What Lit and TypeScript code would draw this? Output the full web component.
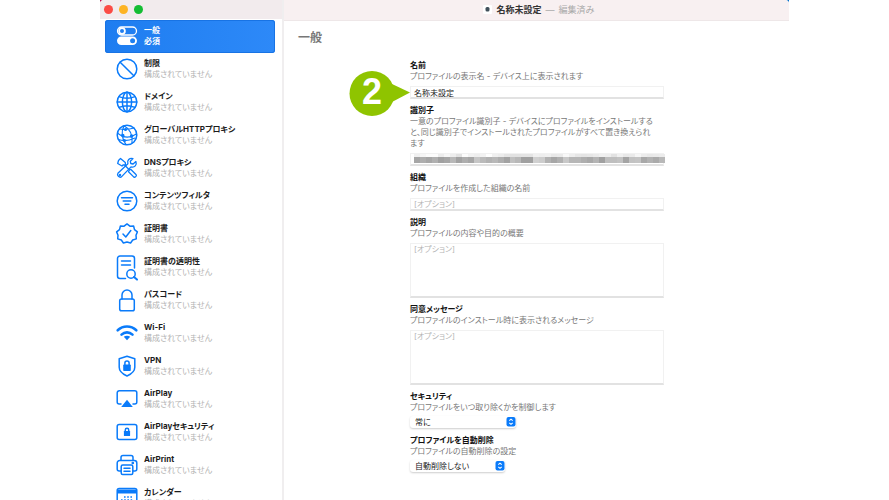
import { LitElement, html, svg, css } from "lit";
import { customElement, state } from "lit/decorators.js";
import { classMap } from "lit/directives/class-map.js";

const NONE = "構成されていません";

const icons: Record<string, unknown> = {
  toggles: svg`
    <rect x="1.5" y="2" width="19" height="8" rx="4" fill="none" stroke="currentColor" stroke-width="1.3"/>
    <circle cx="6" cy="6" r="2.9" fill="none" stroke="currentColor" stroke-width="1.8"/>
    <rect x="1" y="11.4" width="20" height="8.6" rx="4.3" fill="currentColor"/>
    <circle cx="16.6" cy="15.7" r="2.5" fill="#1f80f2"/>`,
  ban: svg`<circle cx="11" cy="11" r="9.8"/><path d="M4.2 4.2l13.6 13.6"/>`,
  globe: svg`<circle cx="11" cy="11" r="9.8"/><ellipse cx="11" cy="11" rx="4.6" ry="9.8"/>
    <path d="M11 1.2v19.6M1.2 11h19.6M3 5.6c4.6 1.8 11.4 1.8 16 0M3 16.4c4.6-1.8 11.4-1.8 16 0"/>`,
  network: svg`<circle cx="11" cy="11" r="9.8"/>
    <path stroke-width="1.2" d="M8 1.8C5 8 6 15 10 20.600M8 1.8C14 5 17 10 16 19.200M1.400 9c6 5 13 5 19 1M3.500 5c6 1 11.500 0 14.500-1M2.500 15.500c5 2 11 1 16.500-1.500"/>
    <circle cx="9.500" cy="5.500" r=".8" class="solid"/><circle cx="6.800" cy="11.500" r="1" class="solid"/><circle cx="15.600" cy="12" r="1" class="solid"/><circle cx="8.500" cy="16.500" r=".8" class="solid"/>`,
  tools: svg`
    <path stroke-width="1.3" d="M2.500 3.500l2-2 4.800 4 .2 2.500-2.500 0-1 1L1.700 6.500z M9 8.500l4.500 4.500M13.200 13.300l1.500-1 5.500 5.500c.8 1-1.200 3-2.300 2.300l-5.400-5.300z"/>
    <path stroke-width="1.3" d="M19.900 4.500l-2.800 2.500-2.300-.5-.5-2.200 2.700-2.700c-3.500-1-6.300 1.800-5.100 5.200L1.900 16.300c-1.400 2 1.500 4.800 3.500 3.600L15 9.900c3.500 1.100 6.200-1.900 4.900-5.400z"/>
    <circle cx="4" cy="18" r=".5"/>`,
  filter: svg`<circle cx="11" cy="11" r="9.8"/><path d="M5.500 7.800h11M7.200 11h7.600M9 14.200h4"/>`,
  seal: svg`<path d="M11 .9l2.900 2.300 3.700-.2.900 3.600 2.900 2.300L20 12.300l.3 3.600-3.600 1.100-2.100 3-3.600-1-3.600 1-2.100-3-3.600-1.100.3-3.600L.6 8.900l2.900-2.300L4.400 3l3.700.2z"/><path d="M7 11l2.800 3 5-6.500"/>`,
  doc: svg`<path d="M9.500 22.500H4A2.500 2.500 0 0 1 1.500 20V2.500A2.500 2.500 0 0 1 4 0h12a2.500 2.500 0 0 1 2.500 2.500V12M5.500 5h9M5.500 9h9"/>
    <circle cx="15" cy="18" r="4.200"/><path d="M18 21l3 2.600" stroke-width="2"/>`,
  lock: svg`<rect x="3.700" y="10" width="14.600" height="11.800" rx="1.800"/><path d="M6 10V6a5 5 0 0 1 10 0v4"/>`,
  wifi: svg`<path stroke-width="2.600" d="M1.700 8.300c5.300-5 13.300-5 18.600 0M5.500 12.600c3.200-3 7.800-3 11 0"/><path class="solid" stroke="none" d="M7.800 14.800c1.900-1.500 4.500-1.500 6.400 0L11 18.200z"/>`,
  shield: svg`<path d="M11 1.200l7.800 2.600v8.400c0 4-3.500 6.800-7.800 8.800-4.300-2-7.800-4.800-7.800-8.800V3.800z"/>
    <rect x="7.200" y="9.500" width="7.600" height="6.500" rx=".8" class="solid" stroke="none"/><path d="M8.900 10V8a2.100 2.100 0 0 1 4.200 0v2"/>`,
  airplay: svg`<path d="M5 16H3.200A2 2 0 0 1 1.200 14V4.800a2 2 0 0 1 2-2h15.600a2 2 0 0 1 2 2V14a2 2 0 0 1-2 2H17"/><path class="solid" stroke="none" d="M11 11.800l5.800 7.200H5.200z"/>`,
  airlock: svg`<rect x="1.200" y="3.600" width="19.600" height="14.800" rx="2"/><rect x="7.900" y="10" width="6.200" height="5" rx=".6" class="solid" stroke="none"/><path d="M9.300 10.500V9a1.700 1.700 0 0 1 3.400 0v1.500"/>`,
  printer: svg`<path d="M5 6.500V3.600a2 2 0 0 1 2-2h8a2 2 0 0 1 2 2v2.900M5 17H3.200a2 2 0 0 1-2-2V9a2.500 2.500 0 0 1 2.500-2.500h14.600A2.500 2.500 0 0 1 20.800 9v6a2 2 0 0 1-2 2H17"/><rect x="5.200" y="11" width="11.600" height="9.400" rx="1.500"/><path d="M8 14.200h6M8 17.200h6"/><circle cx="16.800" cy="9" r=".6" class="solid"/>`,
  calendar: svg`<rect x="1.200" y="1.500" width="19.600" height="18.500" rx="2"/><path class="solid" stroke="none" d="M1 2.500h20v4H1z"/><path stroke-dasharray="1.600 1.600" stroke-linecap="butt" stroke-width="1.700" d="M8 10h9.500M5 13h12.500M5 16h9"/>`,
};

const payloads = [
  ["toggles", "一般", "必須"],
  ["ban", "制限", NONE],
  ["globe", "ドメイン", NONE],
  ["network", "グローバルHTTPプロキシ", NONE],
  ["tools", "DNSプロキシ", NONE],
  ["filter", "コンテンツフィルタ", NONE],
  ["seal", "証明書", NONE],
  ["doc", "証明書の透明性", NONE],
  ["lock", "パスコード", NONE],
  ["wifi", "Wi-Fi", NONE],
  ["shield", "VPN", NONE],
  ["airplay", "AirPlay", NONE],
  ["airlock", "AirPlayセキュリティ", NONE],
  ["printer", "AirPrint", NONE],
  ["calendar", "カレンダー", NONE],
];

/* Grey levels of the blocks that hide the identifier: [upper row, lower row]. */
const mosaic = [
  [240, 166], [246, 174], [252, 166], [252, 176], [236, 160], [246, 166], [238, 184], [226, 162], [252, 174], [242, 166], [238, 198],
  [242, 186], [254, 178], [240, 184], [236, 174], [228, 162], [226, 192], [226, 184], [228, 160], [228, 160], [240, 208],
  [238, 204], [240, 178], [232, 166], [234, 176], [248, 200], [238, 182], [230, 182], [228, 174], [230, 168], [234, 180], [240, 160],
  [238, 190], [226, 190], [240, 194], [232, 164], [234, 194], [246, 196], [236, 168], [232, 178], [234, 170], [236, 184],
];

@customElement("app-root")
export class AppRoot extends LitElement {
  @state() private selected = 0;

  static styles = css`
    :host {
      display: block;
      min-height: 100vh;
      background: #fff;
      color: #1c1c1c;
      font: 8px/11px Inter, "Noto Sans CJK JP", sans-serif;
      font-feature-settings: "palt";
    }
    * { box-sizing: border-box; }
    .backdrop {
      margin: 0 100px;
      background: linear-gradient(90deg, #c8104e 50%, #0a72cc 50%);
    }
    .window {
      display: grid;
      grid-template-columns: 184px 1fr;
      height: 100vh;
      overflow: hidden;
      background: #fff;
      border-radius: 4px 4px 0 0;
    }
    .sidebar { border-right: 2px solid #f0eeef; overflow: hidden; }
    .lights {
      display: flex;
      align-items: center;
      gap: 6px;
      height: 19px;
      padding-left: 4px;
      background: #f2ebed;
    }
    .light { width: 9px; height: 9px; border-radius: 50%; }
    .close { background: #fb4b45; }
    .minimise { background: #fdb323; }
    .zoom { background: #14bd33; }
    .list { list-style: none; margin: 0; padding: 1px 7px 0 5px; }
    .item {
      display: flex;
      align-items: center;
      gap: 6px;
      width: 100%;
      height: 33px;
      padding: 0 0 1px 11px;
      border: 0;
      border-radius: 3px;
      background: none;
      color: #1c1c1c;
      font: inherit;
      font-feature-settings: inherit;
      text-align: left;
    }
    .item.selected {
      background: linear-gradient(90deg, #1e7df0, #2d89f8);
      color: #fff;
      box-shadow: inset 0 0 0 1px #1873e4;
    }
    .icon {
      flex: none;
      width: 22px;
      height: 22px;
      overflow: visible;
      color: #0a7bfa;
      fill: none;
      stroke: currentColor;
      stroke-width: 1.5;
      stroke-linejoin: round;
      stroke-linecap: round;
    }
    .icon .solid { fill: currentColor; }
    .selected .icon { color: #fff; stroke: none; }
    .name, .status { display: block; line-height: 11px; white-space: nowrap; }
    .name { font-weight: 700; }
    .status { color: #b2b2b2; }
    .selected .status { color: #fff; font-weight: 700; }
    .titlebar {
      display: flex;
      align-items: center;
      justify-content: center;
      gap: 4px;
      height: 21px;
      padding: 0 0 2px 4px;
      background: #f8f0f1;
      border-bottom: 1px solid #eee7e8;
      font-size: 9px;
    }
    .file { width: 9px; height: 9px; margin-right: 1px; }
    .titlebar strong { color: #333; }
    .edited { color: #aaa; }
    .pane { min-width: 0; }
    .heading { margin: 0; padding: 8px 0 0 14px; font-size: 12px; line-height: 17px; font-weight: 700; color: #777; }
    .form {
      display: grid;
      gap: 5px;
      margin: 13px 125px 0 126px;
    }
    .field { display: flex; flex-direction: column; position: relative; min-width: 0; }
    label { font-weight: 700; line-height: 12px; color: #111; }
    .hint { margin: 0 0 4px; color: #777; }
    .box {
      width: 100%;
      height: 13px;
      padding: 0 3px;
      border: 1px solid #f1f1f1;
      border-bottom: 2px solid #e2e2e2;
      border-radius: 0;
      background: #fff;
      color: #222;
      font: inherit;
      font-feature-settings: inherit;
      outline: 0;
      resize: none;
      display: block;
    }
    .box::placeholder { color: #b5b5b5; opacity: 1; }
    .area { height: 55px; }
    .mosaic {
      position: absolute;
      inset: auto -1px 3px 4px;
      display: flex;
      height: 9px;
    }
    .mosaic span { flex: 1; display: flex; flex-direction: column; }
    .mosaic i { height: 3px; }
    .mosaic i + i { height: 6px; }
    .picker { position: relative; margin-top: -1px; }
    .picker select {
      appearance: none;
      display: block;
      width: 100%;
      height: 12px;
      padding: 0 5px;
      border: 0;
      border-radius: 3px;
      background: #fff;
      box-shadow: 0 1px 2px #0003;
      color: #222;
      font: inherit;
      font-feature-settings: inherit;
      outline: 0;
      margin-bottom: 1px;
    }
    .wide { width: 106px; }
    .narrow { width: 95px; }
    .chevrons { position: absolute; right: 0; top: 1px; width: 10px; height: 10px; pointer-events: none; }
    .callout {
      position: absolute;
      left: -62px;
      top: 12px;
      width: 62px;
      height: 45px;
      color: #fff;
      font: 700 36px/42px "Liberation Sans", sans-serif;
    }
    .callout svg { position: absolute; inset: 0; width: 62px; height: 45px; }
    .digit { position: relative; display: block; width: 48px; text-align: center; }
  `;

  private chevrons() {
    return html`<svg class="chevrons" viewBox="0 0 10 10" aria-hidden="true">
      <rect x=".5" width="9" height="9.500" rx="2" fill="#0a7bfa" />
      <path d="M3.300 3.700L5 2.200l1.700 1.500M3.300 5.800L5 7.300l1.700-1.500" fill="none" stroke="#fff" stroke-width="1.100" />
    </svg>`;
  }

  render() {
    return html`
      <div class="backdrop">
        <div class="window">
          <nav class="sidebar">
            <div class="lights">
              <span class="light close"></span><span class="light minimise"></span><span class="light zoom"></span>
            </div>
            <ul class="list">
              ${payloads.map(
                ([icon, name, status], i) => html`<li>
                  <button
                    class=${classMap({ item: true, selected: i === this.selected })}
                    @click=${() => (this.selected = i)}
                  >
                    <svg class="icon" viewBox="0 0 22 22" aria-hidden="true">${icons[icon]}</svg>
                    <span><span class="name">${name}</span><span class="status">${status}</span></span>
                  </button>
                </li>`,
              )}
            </ul>
          </nav>
          <main class="pane">
            <header class="titlebar">
              <svg class="file" viewBox="0 0 9 9" aria-hidden="true">
                <rect width="9" height="9" rx="1" fill="#fff" />
                <rect x="2.500" y="2" width="4" height="4.500" rx="1.500" fill="#40505a" />
              </svg>
              <strong>名称未設定</strong><span class="edited">—</span><span class="edited">編集済み</span>
            </header>
            <h1 class="heading">一般</h1>
            <form class="form">
              <div class="field">
                <label for="name">名前</label>
                <p class="hint">プロファイルの表示名 - デバイス上に表示されます</p>
                <input class="box" id="name" value="名称未設定" />
                <div class="callout">
                  <svg viewBox="0 0 62 45" aria-hidden="true">
                    <circle cx="24" cy="22.500" r="22.500" fill="#8fc400" />
                    <path d="M44 13l18 8.500L44 31z" fill="#8fc400" />
                  </svg>
                  <span class="digit">2</span>
                </div>
              </div>
              <div class="field">
                <label for="ident">識別子</label>
                <p class="hint">
                  一意のプロファイル識別子 - デバイスにプロファイルをインストールする<br />と、同じ識別子でインストールされたプロファイルがすべて置き換えられ<br />ます
                </p>
                <input class="box" id="ident" />
                <div class="mosaic">
                  ${mosaic.map(
                    ([a, b]) =>
                      html`<span><i style="background:rgb(${a},${a},${a})"></i><i style="background:rgb(${b},${b},${b})"></i></span>`,
                  )}
                </div>
              </div>
              <div class="field">
                <label for="org">組織</label>
                <p class="hint">プロファイルを作成した組織の名前</p>
                <input class="box" id="org" placeholder="[オプション]" />
              </div>
              <div class="field">
                <label for="desc">説明</label>
                <p class="hint">プロファイルの内容や目的の概要</p>
                <textarea class="box area" id="desc" placeholder="[オプション]"></textarea>
              </div>
              <div class="field">
                <label for="consent">同意メッセージ</label>
                <p class="hint">プロファイルのインストール時に表示されるメッセージ</p>
                <textarea class="box area" id="consent" placeholder="[オプション]"></textarea>
              </div>
              <div class="field">
                <label for="security">セキュリティ</label>
                <p class="hint">プロファイルをいつ取り除くかを制御します</p>
                <div class="picker wide">
                  <select id="security"><option>常に</option></select>${this.chevrons()}
                </div>
              </div>
              <div class="field">
                <label for="remove">プロファイルを自動削除</label>
                <p class="hint">プロファイルの自動削除の設定</p>
                <div class="picker narrow">
                  <select id="remove"><option>自動削除しない</option></select>${this.chevrons()}
                </div>
              </div>
            </form>
          </main>
        </div>
      </div>
    `;
  }
}
